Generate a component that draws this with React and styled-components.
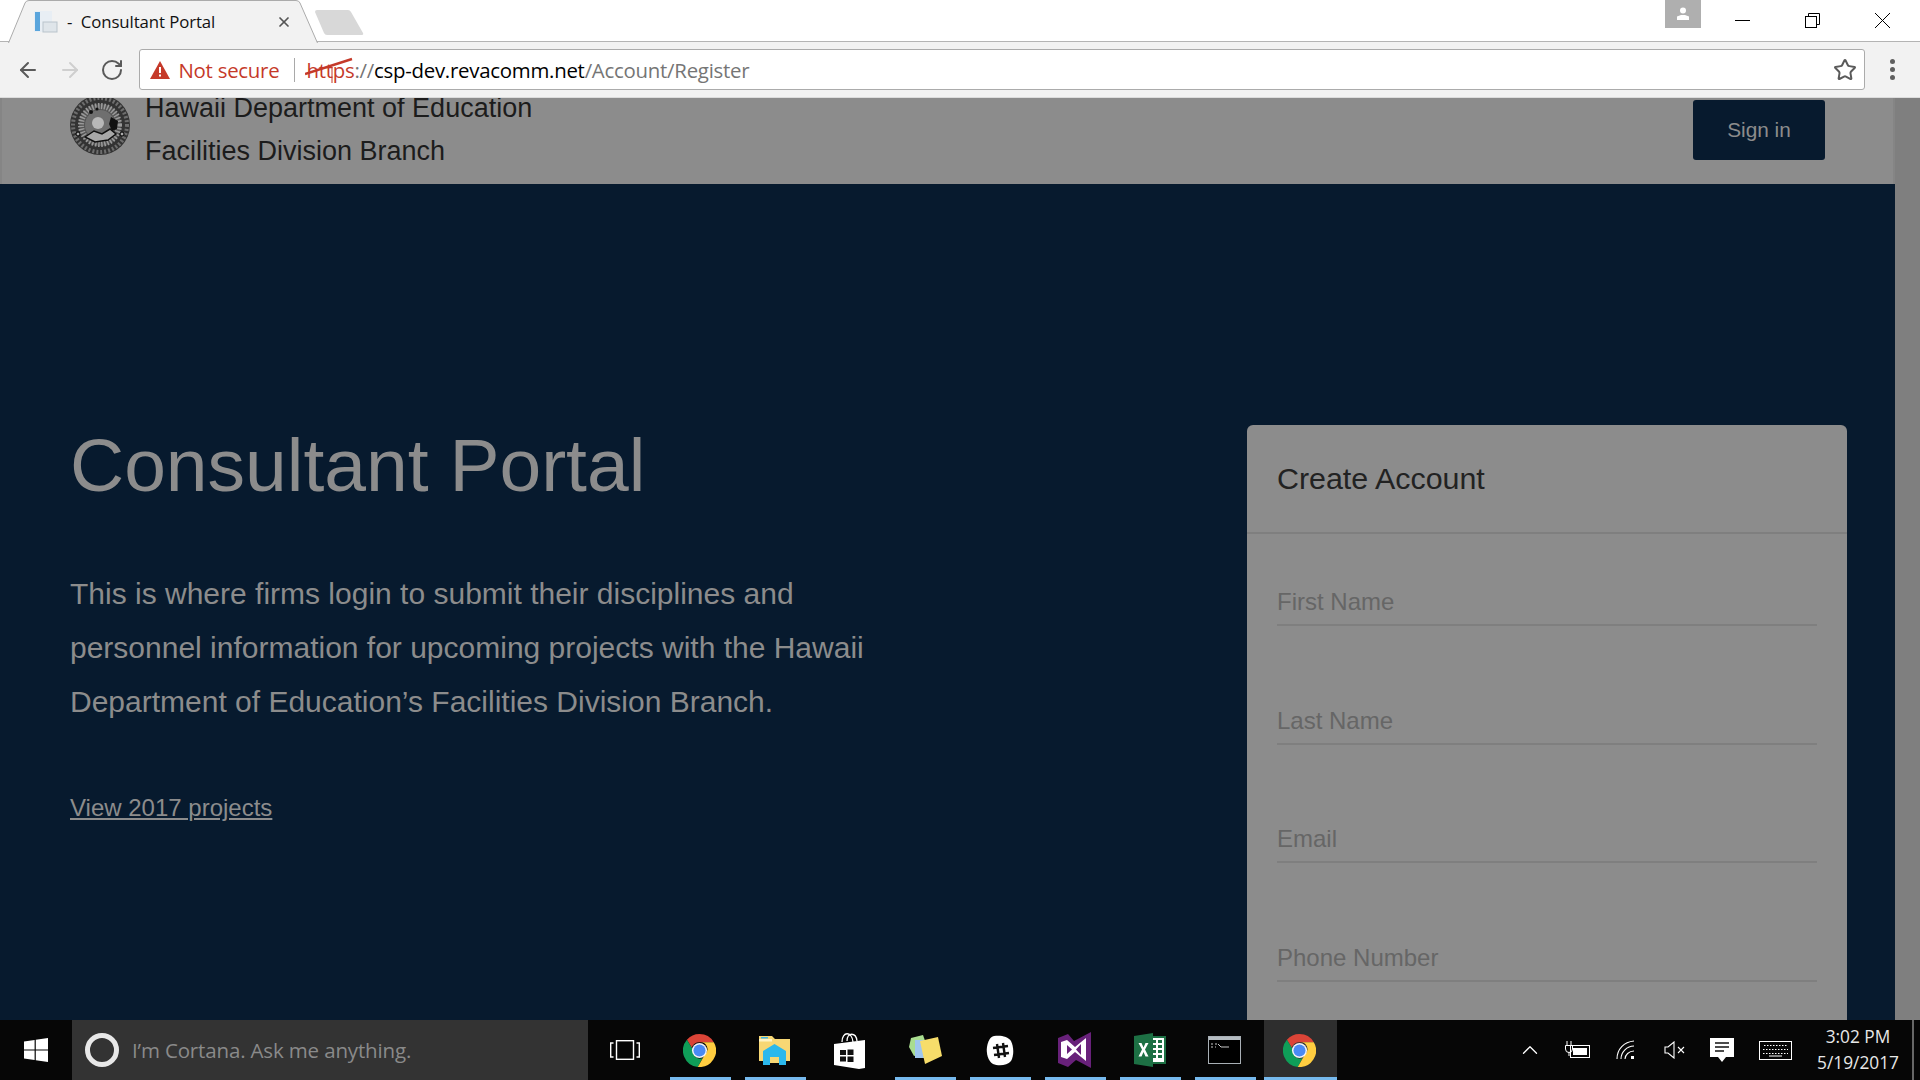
import React from 'react';
import styled, { createGlobalStyle } from 'styled-components';
import { ArrowLeft, ArrowRight, RotateCw, Star, X, ChevronUp } from 'lucide-react';

const GlobalStyle = createGlobalStyle`
  html, body {
    margin: 0;
    padding: 0;
    width: 1920px;
    height: 1080px;
    overflow: hidden;
    background: #fff;
  }
  * { box-sizing: border-box; }
`;

const NAVY = '#071a2e';
const DIM = '#8c8c8c';

const Screen = styled.div`
  width: 1920px;
  height: 1080px;
  display: flex;
  flex-direction: column;
  font-family: "Liberation Sans", Arial, sans-serif;
  overflow: hidden;
`;

/* browser chrome */
const TabStrip = styled.div`
  height: 42px;
  flex: none;
  display: flex;
  align-items: flex-start;
  background: #fff;
  border-bottom: 1px solid #b4b4b4;
`;

const Tab = styled.div`
  position: relative;
  width: 310px;
  height: 43px;
  margin-left: 8px;
  padding-left: 26px;
  display: flex;
  align-items: center;
  gap: 9px;
  flex: none;
  z-index: 1;
`;

const TabShape = styled.svg`
  position: absolute;
  left: 0;
  top: 0;
  z-index: -1;
`;

const TabTitle = styled.span`
  font-family: "Open Sans", sans-serif;
  font-size: 16.8px;
  color: #111;
  width: 200px;
  white-space: pre;
  letter-spacing: -0.1px;
`;

const TabClose = styled(X)`
  width: 16px;
  height: 16px;
  color: #555;
  stroke-width: 2.6;
`;

const NewTab = styled.svg`
  margin: 10px 0 0 -4px;
  flex: none;
`;

const WindowControls = styled.div`
  margin-left: auto;
  padding-right: 2.5px;
  display: flex;
  align-items: flex-start;
`;

const Profile = styled.div`
  width: 36px;
  height: 28px;
  margin-right: 7px;
  background: #afafaf;
  display: flex;
  align-items: center;
  justify-content: center;
`;

const WinButton = styled.div`
  width: 70px;
  height: 41px;
  display: flex;
  align-items: center;
  justify-content: center;
`;

const Toolbar = styled.div`
  height: 56px;
  flex: none;
  background: #f2f2f2;
  display: flex;
  align-items: center;
  padding: 0 0 0 6.5px;
  border-bottom: 1px solid #dcdcdc;
`;

const NavButton = styled.div`
  width: 42px;
  display: flex;
  justify-content: center;
  margin-right: ${p => p.$gap || 0}px;
  color: ${p => (p.$off ? '#cfcfcf' : '#5a5a5a')};
`;

const Omnibox = styled.div`
  width: 1726px;
  height: 41px;
  margin-left: -1px;
  background: #fff;
  border: 1px solid #ababab;
  border-radius: 3px;
  display: flex;
  align-items: center;
  padding: 0 7px 0 10px;
  font-family: "Open Sans", sans-serif;
  font-size: 20.4px;
  letter-spacing: -0.25px;
`;

const NotSecure = styled.span`
  color: #c53929;
  margin-left: 9px;
`;

const OmniDivider = styled.span`
  width: 1px;
  height: 24px;
  background: #a9a9a9;
  margin: 0 11px 0 15px;
`;

const Scheme = styled.span`
  position: relative;
  color: #c53929;
`;

const Strike = styled.svg`
  position: absolute;
  left: -1px;
  top: 1px;
`;

const SchemeRest = styled.span`
  color: #757575;
`;

const Host = styled.span`
  color: #000;
`;

const Path = styled.span`
  color: #757575;
`;

const StarButton = styled(Star)`
  margin-left: auto;
  width: 24px;
  height: 24px;
  color: #5a5a5a;
  stroke-width: 2;
`;

const MenuDots = styled.div`
  flex: 1;
  display: flex;
  flex-direction: column;
  align-items: center;
  gap: 3px;
`;

const Dot = styled.span`
  width: 5px;
  height: 5px;
  border-radius: 50%;
  background: #5f5f5f;
`;

/* page */
const Viewport = styled.div`
  flex: 1;
  min-height: 0;
  display: flex;
  background: #7f7f7f;
  overflow: hidden;
`;

const Page = styled.div`
  width: 1895px;
  flex: none;
  margin-top: -12px;
`;

const Header = styled.header`
  height: 98px;
  padding: 0 70px 0 68px;
  display: flex;
  justify-content: space-between;
  align-items: flex-start;
  background: ${DIM};
  border-right: 2px solid #858585;
  border-left: 2px solid #858585;
`;

const Brand = styled.div`
  display: flex;
  align-items: flex-start;
  gap: 15px;
`;

const Seal = styled.svg`
  margin-top: 9px;
  flex: none;
`;

const BrandText = styled.div`
  padding-top: 1px;
  font-size: 27px;
  line-height: 43px;
  color: #1c1c1c;
`;

const SignIn = styled.button`
  width: 132px;
  height: 60px;
  margin: 14px -2px 0 0;
  background: ${NAVY};
  color: ${DIM};
  border: 0;
  border-radius: 3px;
  font-family: inherit;
  font-size: 20.8px;
`;

const Hero = styled.section`
  background: ${NAVY};
  min-height: 1000px;
  padding: 241px 48px 0 70px;
  display: flex;
  justify-content: space-between;
  align-items: flex-start;
`;

const Intro = styled.div`
  width: 820px;
`;

const Heading = styled.h1`
  margin: 0;
  font-weight: 400;
  font-size: 75px;
  line-height: 80px;
  color: ${DIM};
`;

const Lead = styled.p`
  margin: 62px 0 0;
  font-size: 30px;
  line-height: 54px;
  color: ${DIM};
`;

const ProjectsLink = styled.a`
  display: inline-block;
  margin-top: 65px;
  font-size: 24px;
  line-height: 28px;
  color: ${DIM};
  text-decoration: underline;
`;

const Card = styled.div`
  width: 600px;
  background: ${DIM};
  border-radius: 6px;
`;

const CardHead = styled.div`
  height: 109px;
  padding: 31px 30px 0;
  border-bottom: 2px solid #7f7f7f;
`;

const CardTitle = styled.h2`
  margin: 0;
  font-weight: 400;
  font-size: 30.4px;
  line-height: 44px;
  color: #222;
`;

const CardBody = styled.div`
  padding: 44px 30px 0;
  display: flex;
  flex-direction: column;
  gap: 70.5px;
`;

const Field = styled.input`
  width: 100%;
  height: 48px;
  padding: 2px 0 0;
  background: transparent;
  border: 0;
  border-bottom: 2px solid #7f7f7f;
  font-family: inherit;
  font-size: 24px;
  &::placeholder {
    color: #666;
    opacity: 1;
  }
`;

/* windows taskbar */
const Taskbar = styled.div`
  height: 60px;
  flex: none;
  display: flex;
  align-items: stretch;
  background: #060606;
  position: relative;
  z-index: 2;
`;

const StartButton = styled.div`
  width: 72px;
  flex: none;
  display: flex;
  align-items: center;
  justify-content: center;
`;

const SearchBox = styled.div`
  width: 516px;
  flex: none;
  background: #333;
  display: flex;
  align-items: center;
  padding-left: 13px;
  gap: 13px;
`;

const Ring = styled.span`
  width: 34px;
  height: 34px;
  border-radius: 50%;
  border: 5px solid #e8e8e8;
`;

const SearchText = styled.span`
  font-family: "Open Sans", sans-serif;
  font-size: 20.5px;
  color: #8a8a8a;
  letter-spacing: -0.15px;
`;

const AppSlot = styled.div`
  position: relative;
  width: 75px;
  padding-right: 2px;
  flex: none;
  display: flex;
  align-items: center;
  justify-content: center;
  background: ${p => (p.$active ? '#2e2e2e' : 'transparent')};
  ${p => p.$active && 'margin: 0 1px; width: 73px;'}
  &::after {
    content: '';
    display: ${p => (p.$running ? 'block' : 'none')};
    position: absolute;
    bottom: 0;
    left: ${p => (p.$active ? 0 : '7px')};
    right: ${p => (p.$active ? 0 : '7px')};
    height: 3px;
    background: #76b9ed;
  }
`;

const Tray = styled.div`
  margin-left: auto;
  display: flex;
  align-items: stretch;
`;

const TraySlot = styled.div`
  width: ${p => p.$w || 48}px;
  display: flex;
  align-items: center;
  justify-content: center;
  color: #fff;
`;

const Clock = styled.div`
  width: 108px;
  display: flex;
  flex-direction: column;
  justify-content: center;
  align-items: center;
  font-family: "Open Sans", sans-serif;
  font-size: 17.3px;
  line-height: 26px;
  color: #e8e8e8;
`;

const ShowDesktop = styled.div`
  width: 8px;
  border-left: 2px solid #666;
`;

const WinLogo = () => (
  <svg width="24" height="24" viewBox="0 0 24 24" fill="#fff">
    <path d="M0 3.4 10.6 2v9.4H0zM11.8 1.8 24 0v11.4H11.8zM0 12.6h10.6V22L0 20.6zM11.8 12.6H24V24l-12.2-1.8z" />
  </svg>
);

const Chrome = () => (
  <svg width="33" height="33" viewBox="0 0 48 48">
    <path d="M24 0a24 24 0 0 1 20.8 12H24a12 12 0 0 0-11.3 8L5.7 8.5A24 24 0 0 1 24 0z" fill="#db4437" />
    <path d="M5.7 8.500 15 23.500a10 10 0 0 0 13.500 11.500L21.500 47.900A24 24 0 0 1 5.700 8.500z" fill="#0f9d58" />
    <path d="M44.800 12A24 24 0 0 1 21.500 47.900L32 29.500A10 10 0 0 0 24 12z" fill="#ffcd40" />
    <circle cx="24" cy="24" r="11" fill="#f5f5f5" />
    <circle cx="24" cy="24" r="8.800" fill="#4a8af4" />
  </svg>
);

const Explorer = () => (
  <svg width="33" height="30" viewBox="0 0 33 30">
    <path d="M1 1h13l3 3h15v22H1z" fill="#f7d774" />
    <rect x="1" y="4" width="13" height="2.500" fill="#fff3c4" />
    <rect x="3" y="2" width="7" height="1.500" fill="#3fb4e8" />
    <path d="M5 16 16.500 9 28 16v14h-7v-8h-9v8H5z" fill="#2bb8ec" />
    <rect x="12" y="22" width="9" height="6" fill="#f7d774" />
  </svg>
);

const Store = () => (
  <svg width="33" height="37" viewBox="0 0 33 37">
    <path d="M9 10c0-11 10-11 11 0" fill="none" stroke="#fff" strokeWidth="1.300" />
    <path d="M14 9c0-9 9-9 10 0" fill="none" stroke="#fff" strokeWidth="1.300" />
    <path d="M1 12 32 8v28L26 37 1 33z" fill="#fff" />
    <path d="M7 18h6v5H7zM14.500 17.500h6V23h-6zM7 24.500h6v5H7zM14.500 24.500h6v5.500h-6z" fill="#111" />
  </svg>
);

const Sticky = () => (
  <svg width="34" height="30" viewBox="0 0 34 30">
    <path d="M3 3 15 0l6 17-15 4-5-9z" fill="#a9dd8f" />
    <rect x="7" y="5" width="16" height="18" fill="#9fc6ee" />
    <path d="M12 6 30 2l4 19-17 8z" fill="#f7dd6a" />
  </svg>
);

const Slack = () => (
  <svg width="28" height="31" viewBox="0 0 28 31">
    <path d="M8 1c6-1 14 0 17 5 3 6 3 15 0 20-4 5-13 5-18 3-5-3-7-11-6-17C2 6 4 2 8 1z" fill="#fff" />
    <g stroke="#111" strokeWidth="2.400" fill="none">
      <path d="M11 9l2 14M17 8l2 14M7 13l15-2M8 20l15-2" />
    </g>
  </svg>
);

const VisualStudio = () => (
  <svg width="34" height="36" viewBox="0 0 34 36">
    <path d="M0 6 10 2v0l6 7L33 0v36L18 28l-8 7-10-4z" fill="#68217a" />
    <path d="M3 10l6-2 8 7 11-9v23L17 20l-8 7-6-2zM9 13v9l5-4.500zM23 12l-5 5.500 5 5.500z" fill="#fff" fillRule="evenodd" />
  </svg>
);

const Excel = () => (
  <svg width="32" height="34" viewBox="0 0 32 34">
    <rect x="14" y="3" width="18" height="28" fill="#1d7044" />
    <path d="M15 5h15v24H15z" fill="#fff" />
    <path d="M18 7h4v3h-4zM24 7h4v3h-4zM18 12h4v3h-4zM24 12h4v3h-4zM18 17h4v3h-4zM24 17h4v3h-4zM18 22h4v3h-4zM24 22h4v3h-4z" fill="#1d7044" />
    <path d="M0 3 19 0v34L0 31z" fill="#1d7044" />
    <path d="M4.500 10h3l2 4.500 2-4.500h3l-3.500 6.500 3.500 7h-3l-2-4.500-2 4.500h-3l3.500-7z" fill="#fff" />
  </svg>
);

const Terminal = () => (
  <svg width="33" height="28" viewBox="0 0 33 28">
    <rect x="0.500" y="0.500" width="32" height="27" fill="#000" stroke="#a9b0b6" />
    <rect x="1" y="1" width="31" height="3" fill="#b5bcc2" />
    <path d="M3 8h2M3 11h2M7 8h2M7 11h1M10 8l3 3h8" stroke="#c8c8c8" strokeWidth="1" fill="none" />
  </svg>
);

const TaskView = () => (
  <svg width="30" height="20" viewBox="0 0 30 20" fill="none" stroke="#fff" strokeWidth="1.400">
    <rect x="6.500" y="0.700" width="17" height="18.600" />
    <path d="M3.500 3H.7v14h2.800M26.500 3h2.800v14h-2.800" />
  </svg>
);

const SealMark = () => (
  <Seal width="60" height="60" viewBox="0 0 60 60">
    <circle cx="30" cy="30" r="30" fill="#333" />
    <circle cx="30" cy="30" r="27" fill="none" stroke="#6e6e6e" strokeWidth="4" strokeDasharray="2 2" />
    <circle cx="30" cy="30" r="21" fill="#555" />
    <circle cx="30" cy="30" r="19" fill="none" stroke="#9a9a9a" strokeWidth="6" strokeDasharray="1.500 1.500" />
    <circle cx="30" cy="30" r="15" fill="#6f6f6f" />
    <circle cx="28" cy="28" r="6" fill="#b8b8b8" />
    <path d="M15 42 24 36l8 3 8-5 6 5-8 6-13 2z" fill="#a8a8a8" stroke="#111" strokeWidth="1.500" />
    <path d="M41 22l7 4-1 8-5 2-3-7z" fill="#111" />
    <circle cx="21" cy="17" r="2" fill="#111" />
    <circle cx="27" cy="14" r="1.500" fill="#111" />
    <circle cx="8" cy="39" r="2" fill="#aaa" stroke="#000" />
    <circle cx="52" cy="39" r="2" fill="#aaa" stroke="#000" />
  </Seal>
);

const apps = [
  { id: 'chrome', icon: <Chrome />, running: true },
  { id: 'explorer', icon: <Explorer />, running: true },
  { id: 'store', icon: <Store /> },
  { id: 'sticky', icon: <Sticky />, running: true },
  { id: 'slack', icon: <Slack />, running: true },
  { id: 'vs', icon: <VisualStudio />, running: true },
  { id: 'excel', icon: <Excel />, running: true },
  { id: 'cmd', icon: <Terminal />, running: true },
  { id: 'chrome-active', icon: <Chrome />, running: true, active: true },
];

const fields = ['First Name', 'Last Name', 'Email', 'Phone Number', 'Password'];

const App = () => (
  <Screen>
    <GlobalStyle />
    <TabStrip>
      <Tab>
        <TabShape width="310" height="43" viewBox="0 0 310 43">
          <path d="M0.500 43 17 3Q18 .5 21 .5H288Q291 .5 292 3L309.500 43" fill="#f2f2f2" stroke="#ababab" />
        </TabShape>
        <svg width="24" height="22" viewBox="0 0 24 22">
          <rect x="0" y="0" width="18" height="21" fill="#e8eef4" />
          <rect x="1" y="1" width="5" height="19" fill="#5aa5dc" />
          <rect x="9" y="11" width="14" height="10" fill="#dfe5ea" stroke="#b9c3cb" />
        </svg>
        <TabTitle>-  Consultant Portal</TabTitle>
        <TabClose />
      </Tab>
      <NewTab width="50" height="26" viewBox="0 0 50 26">
        <path d="M1 2Q1 0 3 0H34Q36 0 37 2L49 23Q50 25 47 25H13Q11 25 10 23z" fill="#d8d8d8" />
      </NewTab>
      <WindowControls>
        <Profile>
          <svg width="14" height="14" viewBox="0 0 14 14" fill="#fff">
            <circle cx="7" cy="3.500" r="3" />
            <path d="M1 9.500 5 8h4l4 1.500V13H1z" />
          </svg>
        </Profile>
        <WinButton>
          <svg width="15" height="15" viewBox="0 0 15 15"><path d="M0 7.500h15" stroke="#000" /></svg>
        </WinButton>
        <WinButton>
          <svg width="15" height="15" viewBox="0 0 15 15" fill="none" stroke="#000">
            <rect x="0.500" y="3.500" width="11" height="11" />
            <path d="M3.500 3.500v-3h11v11h-3" />
          </svg>
        </WinButton>
        <WinButton>
          <svg width="15" height="15" viewBox="0 0 15 15"><path d="M0 0l15 15M15 0 0 15" stroke="#000" /></svg>
        </WinButton>
      </WindowControls>
    </TabStrip>
    <Toolbar>
      <NavButton><ArrowLeft size={24} /></NavButton>
      <NavButton $off><ArrowRight size={24} /></NavButton>
      <NavButton $gap={7}><RotateCw size={24} /></NavButton>
      <Omnibox>
        <svg width="20" height="18" viewBox="0 0 20 18">
          <path d="M10 0 20 18H0z" fill="#c53929" />
          <path d="M9 6h2v6H9zM9 13.500h2v2H9z" fill="#fff" />
        </svg>
        <NotSecure>Not secure</NotSecure>
        <OmniDivider />
        <Scheme>
          https
          <Strike width="48" height="28" viewBox="0 0 48 28">
            <path d="M0 17 47 2" stroke="#c53929" strokeWidth="2.400" />
            <path d="M27 10v16" stroke="#c53929" strokeWidth="1" />
          </Strike>
        </Scheme>
        <SchemeRest>://</SchemeRest>
        <Host>csp-dev.revacomm.net</Host>
        <Path>/Account/Register</Path>
        <StarButton />
      </Omnibox>
      <MenuDots><Dot /><Dot /><Dot /></MenuDots>
    </Toolbar>
    <Viewport>
      <Page>
        <Header>
          <Brand>
            <SealMark />
            <BrandText>
              Hawaii Department of Education
              <br />
              Facilities Division Branch
            </BrandText>
          </Brand>
          <SignIn>Sign in</SignIn>
        </Header>
        <Hero>
          <Intro>
            <Heading>Consultant Portal</Heading>
            <Lead>
              This is where firms login to submit their disciplines and personnel information for
              upcoming projects with the Hawaii Department of Education’s Facilities Division Branch.
            </Lead>
            <ProjectsLink href="#">View 2017 projects</ProjectsLink>
          </Intro>
          <Card>
            <CardHead>
              <CardTitle>Create Account</CardTitle>
            </CardHead>
            <CardBody>
              {fields.map(f => (
                <Field key={f} placeholder={f} readOnly />
              ))}
            </CardBody>
          </Card>
        </Hero>
      </Page>
    </Viewport>
    <Taskbar>
      <StartButton><WinLogo /></StartButton>
      <SearchBox>
        <Ring />
        <SearchText>I’m Cortana. Ask me anything.</SearchText>
      </SearchBox>
      <AppSlot><TaskView /></AppSlot>
      {apps.map(a => (
        <AppSlot key={a.id} $running={a.running} $active={a.active}>{a.icon}</AppSlot>
      ))}
      <Tray>
        <TraySlot><ChevronUp size={26} strokeWidth={1.2} /></TraySlot>
        <TraySlot>
          <svg width="26" height="18" viewBox="0 0 26 18" fill="none" stroke="#fff">
            <rect x="5.500" y="4.500" width="19" height="12" />
            <rect x="8" y="7" width="14" height="7" fill="#fff" stroke="none" />
            <path d="M2 0v4M6 0v4M0.500 4.500h7V8a3 3 0 0 1-7 0zM4 11v4" />
          </svg>
        </TraySlot>
        <TraySlot>
          <svg width="20" height="20" viewBox="0 0 20 20" fill="none" stroke="#fff" strokeWidth="1.100">
            <path d="M1 19C1 9 8 2 18 1" />
            <path d="M5 19c0-7 6-13 13-13" />
            <path d="M9 19c0-4 4-8 9-8" />
            <rect x="15" y="16" width="3" height="3" fill="#fff" stroke="none" />
          </svg>
        </TraySlot>
        <TraySlot>
          <svg width="21" height="18" viewBox="0 0 21 18" fill="none" stroke="#fff" strokeWidth="1.100">
            <path d="M1 6h3l6-5v16l-6-5H1z" />
            <path d="M14 6l6 6M20 6l-6 6" />
          </svg>
        </TraySlot>
        <TraySlot>
          <svg width="24" height="24" viewBox="0 0 24 24">
            <path d="M0 0h24v19h-8l-4 5-4-5H0z" fill="#fff" />
            <path d="M5 5h14M5 9h14M5 13h9" stroke="#111" strokeWidth="1.300" />
          </svg>
        </TraySlot>
        <TraySlot $w={58}>
          <svg width="33" height="19" viewBox="0 0 33 19" fill="none" stroke="#fff">
            <rect x="0.500" y="0.500" width="32" height="18" />
            <path d="M5 4.500h23M4 8.500h25M4 12.500h25" strokeDasharray="1.500 1.500" />
            <path d="M10 15h13" />
          </svg>
        </TraySlot>
        <Clock>
          <span>3:02 PM</span>
          <span>5/19/2017</span>
        </Clock>
        <ShowDesktop />
      </Tray>
    </Taskbar>
  </Screen>
);

export default App;
